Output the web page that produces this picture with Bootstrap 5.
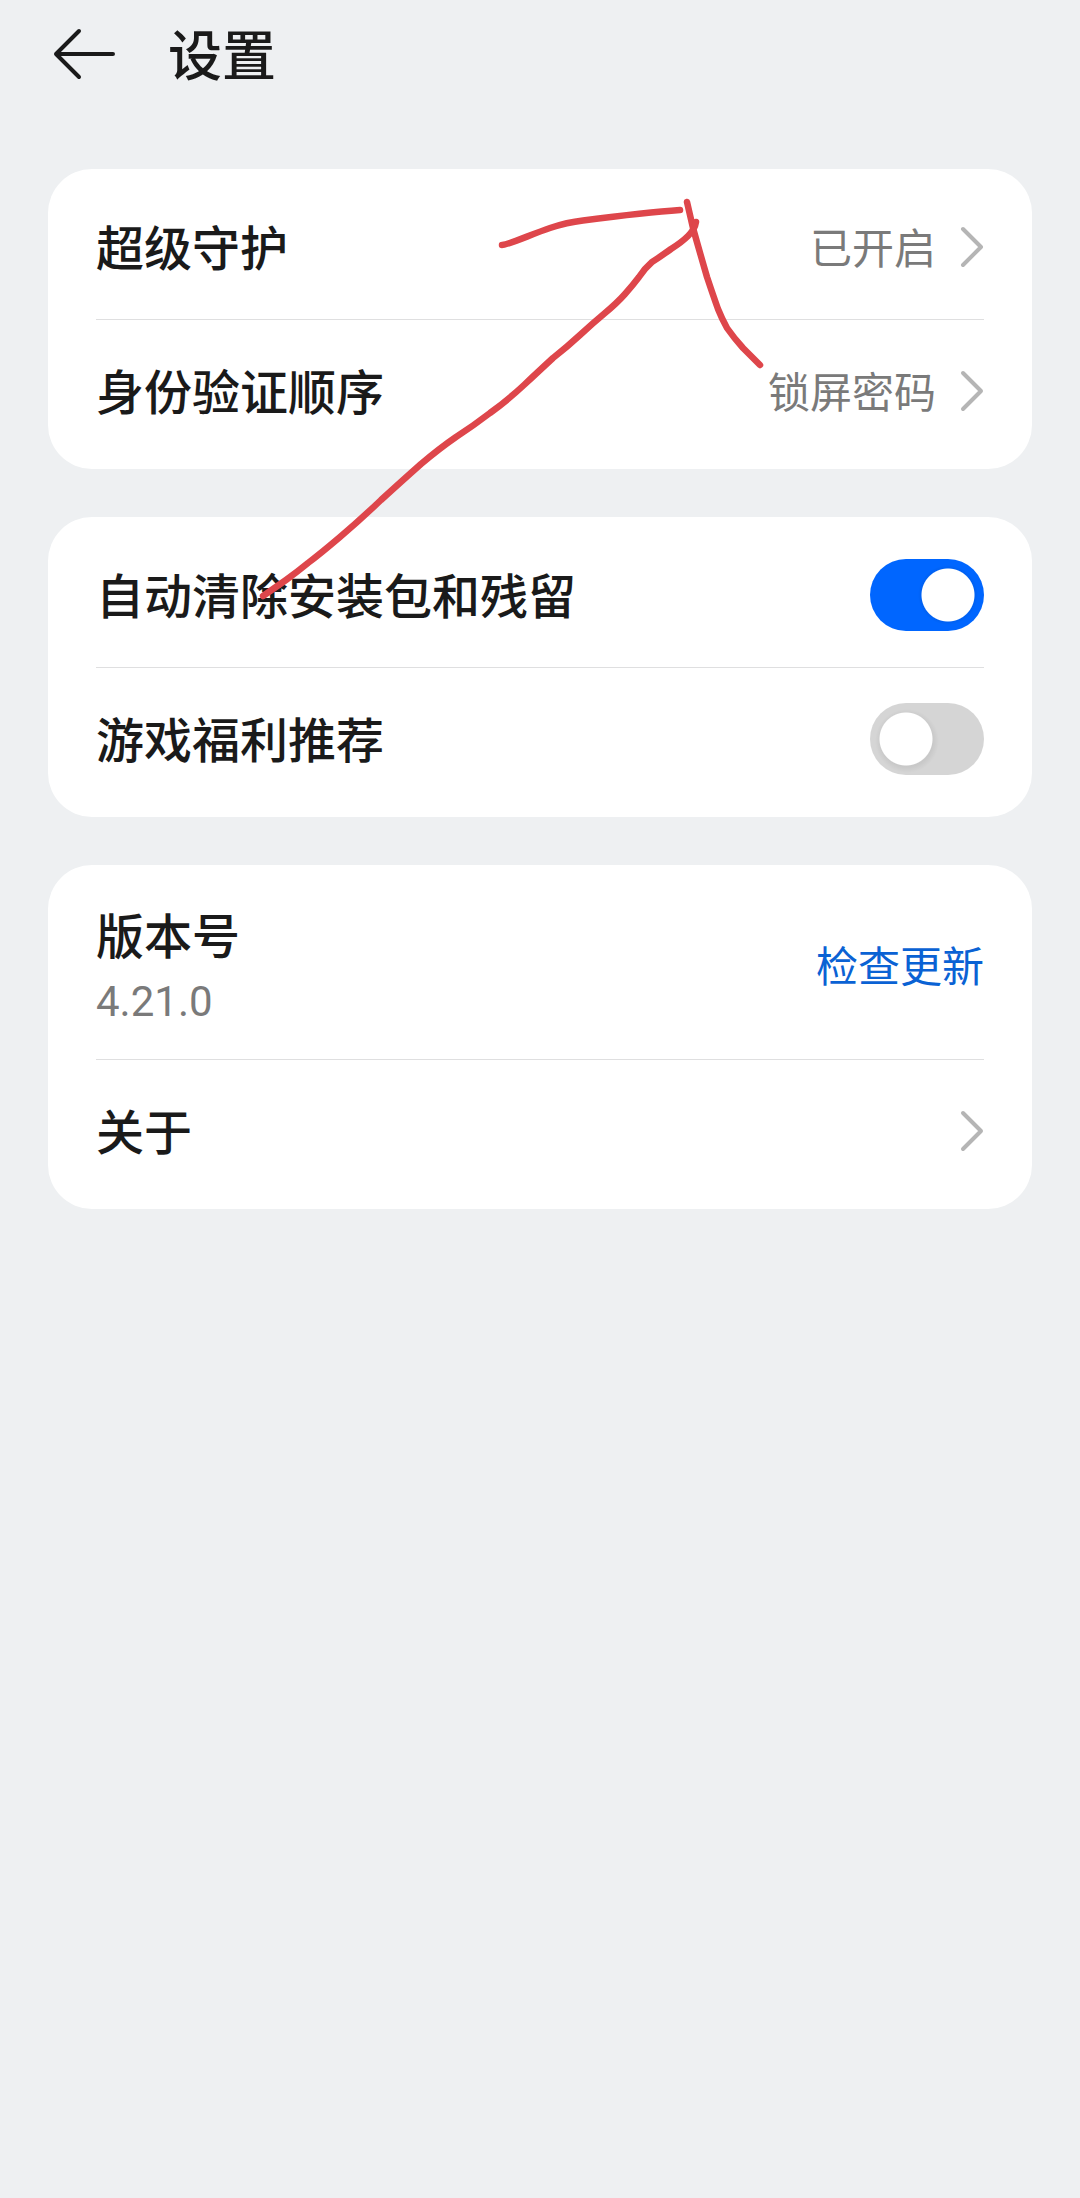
<!DOCTYPE html>
<html lang="zh-CN">
<head>
<meta charset="utf-8">
<meta name="viewport" content="width=device-width, initial-scale=1">
<title>设置</title>
<link href="https://cdn.jsdelivr.net/npm/bootstrap@5.3.0/dist/css/bootstrap.min.css" rel="stylesheet">
<style>
  body {
    background: #eef0f2;
    color: #1a1a1a;
    font-family: Roboto, "Noto Sans CJK SC", sans-serif;
    font-size: 42px;
    line-height: 60px;
  }
  .page-head { padding: 14px 48px 75px; gap: 48px; }
  .page-title { padding-top: 8px; font-size: 54px; line-height: 72px; font-weight: 500; }
  .back-btn { width: 72px; height: 80px; }
  .settings { padding: 0 48px 48px; gap: 48px; }
  .settings-card {
    --bs-card-border-width: 0;
    --bs-card-border-radius: 44px;
    padding: 6px 48px;
  }
  .setting {
    min-height: 144px;
    padding: 0;
    border: 0;
    gap: 24px;
    background: transparent;
    color: inherit;
  }
  .setting + .setting { box-shadow: inset 0 1px #dfdfe0; }
  .setting > span, .setting > label, .setting > div { padding-top: 6px; }
  .setting-tall { min-height: 188px; }
  .setting-name { font-size: 48px; line-height: 68px; font-weight: 500; }
  .setting-value { color: #7a7a7a; }
  .update-btn.btn { padding: 6px 0 0; color: #0a62d4; font-size: 42px; line-height: 60px; }
  .chevron { width: 24px; height: 42px; }
  .toggle.form-check-input {
    width: 114px;
    height: 72px;
    border: 0;
    border-radius: 36px;
    background-color: #d5d5d5;
    background-image:
      radial-gradient(circle at 36px 36px, #fff 26px, transparent 27px),
      radial-gradient(circle at 37px 38px, rgba(0,0,0,.06) 26px, transparent 32px);
    background-position: 0 0;
    background-size: 100% 100%;
  }
  .toggle.form-check-input:checked {
    background-color: #0066ff;
    background-image: radial-gradient(circle at 78px 36px, #fff 26px, rgba(0,0,0,.05) 27px, transparent 30px);
    background-position: 0 0;
  }
</style>
</head>
<body>
<div class="position-relative">
  <header class="page-head d-flex align-items-center">
    <button type="button" class="back-btn btn p-0 border-0" aria-label="返回">
      <svg class="d-block" width="72" height="80" viewBox="0 0 72 80" fill="none" stroke="#1a1a1a" stroke-width="4" stroke-linecap="round" stroke-linejoin="round" aria-hidden="true">
        <path d="M31 17 8 40l23 23M8 40h57"/>
      </svg>
    </button>
    <h1 class="page-title m-0">设置</h1>
  </header>

  <main class="settings d-flex flex-column">
    <section class="settings-card card">
      <a href="#guard" class="setting d-flex align-items-center text-decoration-none">
        <span class="setting-name me-auto">超级守护</span>
        <span class="setting-value">已开启</span>
        <svg class="chevron" viewBox="0 0 24 42" fill="none" stroke="#b5b5b5" stroke-width="4" stroke-linecap="round" stroke-linejoin="round" aria-hidden="true"><path d="m3 3 18 18L3 39"/></svg>
      </a>
      <a href="#auth-order" class="setting d-flex align-items-center text-decoration-none">
        <span class="setting-name me-auto">身份验证顺序</span>
        <span class="setting-value">锁屏密码</span>
        <svg class="chevron" viewBox="0 0 24 42" fill="none" stroke="#b5b5b5" stroke-width="4" stroke-linecap="round" stroke-linejoin="round" aria-hidden="true"><path d="m3 3 18 18L3 39"/></svg>
      </a>
    </section>

    <section class="settings-card card">
      <div class="setting form-switch d-flex align-items-center">
        <label class="setting-name me-auto" for="auto-clean">自动清除安装包和残留</label>
        <input class="toggle form-check-input m-0" type="checkbox" role="switch" id="auto-clean" checked>
      </div>
      <div class="setting form-switch d-flex align-items-center">
        <label class="setting-name me-auto" for="game-benefits">游戏福利推荐</label>
        <input class="toggle form-check-input m-0" type="checkbox" role="switch" id="game-benefits">
      </div>
    </section>

    <section class="settings-card card">
      <div class="setting setting-tall d-flex align-items-center">
        <div class="me-auto">
          <div class="setting-name">版本号</div>
          <div class="setting-value">4.21.0</div>
        </div>
        <button type="button" class="update-btn btn border-0">检查更新</button>
      </div>
      <a href="#about" class="setting d-flex align-items-center text-decoration-none">
        <span class="setting-name me-auto">关于</span>
        <svg class="chevron" viewBox="0 0 24 42" fill="none" stroke="#b5b5b5" stroke-width="4" stroke-linecap="round" stroke-linejoin="round" aria-hidden="true"><path d="m3 3 18 18L3 39"/></svg>
      </a>
    </section>
  </main>

  <!-- hand-drawn arrow pointing at the first setting -->
  <svg class="position-absolute top-0 start-0 w-100 pe-none" viewBox="0 0 1080 640" fill="none" stroke="#de464b" stroke-width="6.500" stroke-linecap="round" stroke-linejoin="round" aria-hidden="true">
    <path d="M502 245C508 245 532 234 550 228C562 224 570 222 583 220.500C610 217 650 212 680 210"/>
    <path d="M687 202Q690 215 693 228Q700 253 707 277Q713 295 718 309Q722 319 727 328Q734 338 743 348L760 365"/>
    <path d="M696 222Q695 229 688 236Q682 242 671 249Q660 257 652 262Q645 268 639 277Q633 285 625 294Q617 303 605 313Q593 323 580 335Q567 347 553 358Q540 370 524 385Q508 400 490 413Q473 426 456 437Q440 448 421 464Q403 480 381 500Q360 520 340 537Q320 554 308 563Q297 572 286 580L263 596"/>
  </svg>
</div>
<script src="https://cdn.jsdelivr.net/npm/bootstrap@5.3.0/dist/js/bootstrap.bundle.min.js"></script>
</body>
</html>
